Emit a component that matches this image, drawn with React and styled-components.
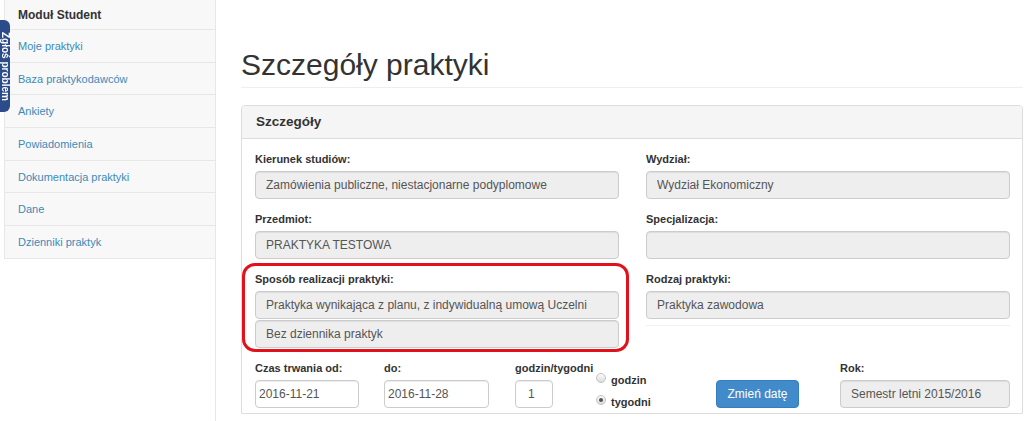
import React from 'react'
import styled, { createGlobalStyle } from 'styled-components'

const GlobalStyle = createGlobalStyle`
  body {
    margin: 0;
    background: #fff;
    font-family: "Liberation Sans", Arial, sans-serif;
    color: #333;
    overflow: hidden;
  }
`;

const Page = styled.div`
  display: flex;
  min-height: 100vh;
`;

const Sidebar = styled.aside`
  flex-shrink: 0;
  width: 216px;
  box-sizing: border-box;
  padding-left: 4px;
  border-right: 1px solid #e7e7e7;
`;

const NavList = styled.ul`
  margin: 0;
  padding: 0;
  list-style: none;
  border-left: 1px solid #e7e7e7;
  background: #f8f8f8;
`;

const NavHeader = styled.li`
  display: flex;
  align-items: center;
  height: 29px;
  padding: 0 13px;
  border-bottom: 1px solid #e7e7e7;
  font-size: 12px;
  font-weight: bold;
  color: #333;
`;

const NavItem = styled.li`
  display: flex;
  align-items: center;
  height: 31.7px;
  padding: 0 13px;
  border-bottom: 1px solid #e7e7e7;
  font-size: 11px;
  color: #3d8ab8;
`;

const FeedbackTab = styled.div`
  position: fixed;
  left: 0;
  top: 20px;
  width: 10px;
  height: 92px;
  overflow: hidden;
  background: #2c4b8a;
  border-radius: 0 6px 6px 0;
  color: #fff;
  font-size: 10px;
  font-weight: bold;
  line-height: 10px;
  writing-mode: vertical-rl;
  text-align: center;
  padding-right: 0;
  box-sizing: border-box;
  padding-left: 2px;
  z-index: 5;
`;

const Main = styled.main`
  flex: 1;
  padding: 0 1px 0 25px;
`;

const Title = styled.h1`
  margin: 48px 0 0;
  padding-bottom: 6px;
  border-bottom: 1px solid #eee;
  font-size: 30px;
  font-weight: normal;
  line-height: 33px;
  color: #333;
`;

const Panel = styled.section`
  margin-top: 17px;
  border: 1px solid #ddd;
  border-radius: 4px 4px 0 0;
`;

const PanelHeading = styled.h3`
  margin: 0;
  padding: 9px 14px;
  background: #f5f5f5;
  border-bottom: 1px solid #ddd;
  border-radius: 3px 3px 0 0;
  font-size: 13.5px;
  line-height: 14px;
  font-weight: bold;
  color: #333;
`;

const PanelBody = styled.div`
  padding: 12px 11px 0 13px;
`;

const Grid = styled.div`
  display: grid;
  grid-template-columns: 364px 364px;
  column-gap: 27px;
`;

const Group = styled.div`
  position: relative;
  margin-bottom: 12px;

  ${p => p.$marked && `
    &::after {
      content: '';
      position: absolute;
      top: -8px;
      left: -13px;
      right: -10px;
      bottom: -4px;
      border: 3px solid #e2121c;
      border-radius: 13px;
      pointer-events: none;
    }
  `}
`;

const Label = styled.label`
  display: block;
  margin-bottom: 4px;
  font-size: 11px;
  line-height: 16px;
  font-weight: bold;
  color: #333;
  white-space: nowrap;
`;

const Input = styled.input`
  display: block;
  width: ${p => (p.$w ? `${p.$w}px` : '100%')};
  height: 28px;
  box-sizing: border-box;
  margin: ${p => (p.$stacked ? '1px 0 0' : '0')};
  padding: ${p => p.$pad || '0 10px'};
  border: 1px solid #ccc;
  border-radius: 4px;
  background: ${p => (p.readOnly ? '#eee' : '#fff')};
  box-shadow: inset 0 1px 1px rgba(0, 0, 0, 0.075);
  font-family: "Liberation Sans", Arial, sans-serif;
  font-size: 12px;
  color: #555;
  outline: none;
`;

const Divider = styled.div`
  margin-top: 6px;
  border-top: 1px solid #f2f2f2;
`;

const BottomRow = styled.div`
  display: flex;
  align-items: flex-start;
`;

const Cell = styled.div`
  flex-shrink: 0;
  width: ${p => p.$w}px;
  margin-right: ${p => p.$mr || 0}px;
`;

const RadioList = styled.div`
  margin-top: 9px;
`;

const RadioRow = styled.div`
  display: flex;
  height: 22px;
  line-height: 22px;
  font-size: 11px;
  font-weight: bold;
  color: #333;
`;

const RadioDot = styled.span`
  position: relative;
  width: 10px;
  height: 10px;
  margin: 4px 5px 0 0;
  box-sizing: border-box;
  border: 1px solid #c2c2c2;
  border-radius: 50%;
  background: linear-gradient(#fbfbfb, #dcdcdc);

  ${p => p.$checked && `
    &::after {
      content: '';
      position: absolute;
      left: 2px;
      top: 2px;
      width: 4px;
      height: 4px;
      border-radius: 50%;
      background: #555;
    }
  `}
`;

const Button = styled.button`
  display: block;
  margin-top: 20px;
  width: 100%;
  height: 28px;
  padding: 0;
  border: 1px solid #357ebd;
  border-radius: 4px;
  background: #428bca;
  color: #fff;
  font-family: "Liberation Sans", Arial, sans-serif;
  font-size: 12px;
  white-space: nowrap;
`;

const navItems = ['Moje praktyki', 'Baza praktykodawców', 'Ankiety', 'Powiadomienia', 'Dokumentacja praktyki', 'Dane', 'Dzienniki praktyk'];

function App() {
  return (
    <>
      <GlobalStyle />
      <FeedbackTab>Zgłoś problem</FeedbackTab>
      <Page>
        <Sidebar>
          <NavList>
            <NavHeader>Moduł Student</NavHeader>
            {navItems.map(item => <NavItem key={item}>{item}</NavItem>)}
          </NavList>
        </Sidebar>
        <Main>
          <Title>Szczegóły praktyki</Title>
          <Panel>
            <PanelHeading>Szczegóły</PanelHeading>
            <PanelBody>
              <Grid>
                <Group>
                  <Label>Kierunek studiów:</Label>
                  <Input readOnly defaultValue="Zamówienia publiczne, niestacjonarne podyplomowe" />
                </Group>
                <Group>
                  <Label>Wydział:</Label>
                  <Input readOnly defaultValue="Wydział Ekonomiczny" />
                </Group>
                <Group>
                  <Label>Przedmiot:</Label>
                  <Input readOnly defaultValue="PRAKTYKA TESTOWA" />
                </Group>
                <Group>
                  <Label>Specjalizacja:</Label>
                  <Input readOnly defaultValue="" />
                </Group>
                <Group $marked>
                  <Label>Sposób realizacji praktyki:</Label>
                  <Input readOnly defaultValue="Praktyka wynikająca z planu, z indywidualną umową Uczelni" />
                  <Input $stacked readOnly defaultValue="Bez dziennika praktyk" />
                </Group>
                <Group>
                  <Label>Rodzaj praktyki:</Label>
                  <Input readOnly defaultValue="Praktyka zawodowa" />
                  <Divider />
                </Group>
              </Grid>
              <BottomRow>
                <Cell $w={104} $mr={25}>
                  <Label>Czas trwania od:</Label>
                  <Input defaultValue="2016-11-21" $pad="0 3px" />
                </Cell>
                <Cell $w={105} $mr={26}>
                  <Label>do:</Label>
                  <Input defaultValue="2016-11-28" $pad="0 3px" />
                </Cell>
                <Cell $w={78} $mr={3}>
                  <Label>godzin/tygodni</Label>
                  <Input defaultValue="1" $pad="0 12px" $w={38} />
                </Cell>
                <Cell $w={120}>
                  <RadioList>
                    <RadioRow><RadioDot />godzin</RadioRow>
                    <RadioRow><RadioDot $checked />tygodni</RadioRow>
                  </RadioList>
                </Cell>
                <Cell $w={83} $mr={41}>
                  <Button type="button">Zmień datę</Button>
                </Cell>
                <Cell $w={170}>
                  <Label>Rok:</Label>
                  <Input readOnly defaultValue="Semestr letni 2015/2016" />
                </Cell>
              </BottomRow>
            </PanelBody>
          </Panel>
        </Main>
      </Page>
    </>
  )
}

export default App
